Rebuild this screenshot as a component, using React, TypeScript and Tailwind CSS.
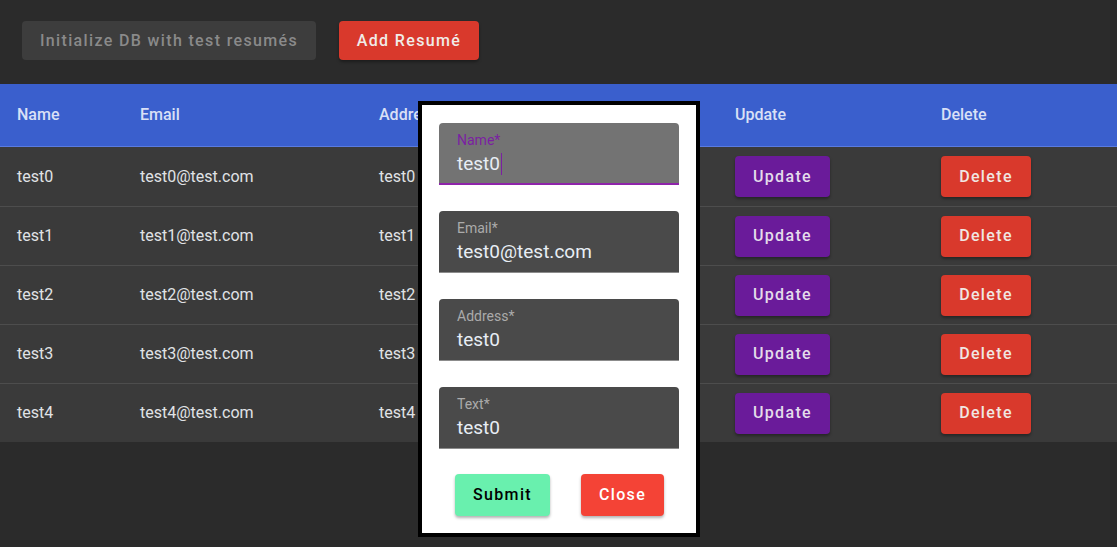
import React from "react";

type Resume = { name: string; email: string; address: string; text: string };

const RESUMES: Resume[] = [0, 1, 2, 3, 4].map(i => ({
  name: `test${i}`,
  email: `test${i}@test.com`,
  address: `test${i}`,
  text: `test${i}`,
}));

const COLS = "grid grid-cols-[140px_239px_178px_178px_206px_1fr] items-center";

function Field({ label, value, focused }: { label: string; value: string; focused?: boolean }) {
  return (
    <div
      className={`h-[62px] w-[240px] rounded-t-[4px] px-[18px] pt-[7px] ${
        focused ? "bg-[#737373] border-b-2 border-[#8e24aa]" : "bg-[#4a4a4a] border-b border-[#8c8c8c]"
      }`}
    >
      <div className={`text-[14px] leading-[20px] ${focused ? "text-[#7b1fa2]" : "text-[#ababab]"}`}>{label}</div>
      <div className="mt-px flex items-center text-[19px] leading-[26px] text-[#e8eef5]">
        {value}
        {focused && <span className="ml-px inline-block h-[22px] w-px bg-[#7b1fa2]" />}
      </div>
    </div>
  );
}

export default function App() {
  return (
    <div className="relative min-h-[547px] bg-[#2b2b2b] font-['Roboto',sans-serif]">
      {/* Toolbar */}
      <div className="flex h-[84px] items-start gap-[23px] pl-[22px] pt-[21px]">
        <button className="h-[39px] w-[294px] rounded-[4px] bg-[#3d3d3d] text-[16px] font-medium tracking-[1.35px] text-[#8a8a8a]">
          Initialize DB with test resumés
        </button>
        <button className="h-[39px] w-[140px] rounded-[4px] bg-[#d9392c] text-[16px] font-medium tracking-[1.35px] text-[#f0ece8] shadow-[0_2px_3px_rgba(0,0,0,0.35)]">
          Add Resumé
        </button>
      </div>

      {/* Table */}
      <div>
        <div className={`${COLS} h-[63px] border-b border-[#5a7be0] bg-[#3a5fcd] text-[16px] font-medium text-[#d9e0f6]`}>
          <div className="pl-[17px]">Name</div>
          <div>Email</div>
          <div>Address</div>
          <div>Text</div>
          <div>Update</div>
          <div>Delete</div>
        </div>
        {RESUMES.map((r, i) => (
          <div
            key={r.name}
            className={`${COLS} h-[59px] bg-[#3a3a3a] text-[16px] text-[#e0e3e6] ${i > 0 ? "border-t border-[#4d4d4d]" : ""}`}
          >
            <div className="pl-[17px]">{r.name}</div>
            <div>{r.email}</div>
            <div>{r.address}</div>
            <div>{r.text}</div>
            <div>
              <button className="h-[41px] w-[95px] rounded-[4px] bg-[#6a1b9a] text-[16px] font-medium tracking-[1.35px] text-[#e4dcea] shadow-[0_2px_3px_rgba(0,0,0,0.35)]">
                Update
              </button>
            </div>
            <div>
              <button className="h-[41px] w-[90px] rounded-[4px] bg-[#d9392c] text-[16px] font-medium tracking-[1.35px] text-[#f0e6e2] shadow-[0_2px_3px_rgba(0,0,0,0.35)]">
                Delete
              </button>
            </div>
          </div>
        ))}
      </div>

      {/* Update modal */}
      <div className="absolute left-[418px] top-[101px] w-[282px] border-4 border-black bg-white px-[17px] pb-[17px] pt-[18px]">
        <div className="flex flex-col gap-[26px]">
          <Field label="Name*" value="test0" focused />
          <Field label="Email*" value="test0@test.com" />
          <Field label="Address*" value="test0" />
          <Field label="Text*" value="test0" />
        </div>
        <div className="mt-[25px] flex gap-[31px] pl-[16px]">
          <button className="h-[42px] w-[95px] rounded-[4px] bg-[#69f0ae] text-[16px] font-medium tracking-[1.35px] text-black shadow-[0_2px_3px_rgba(0,0,0,0.3)]">
            Submit
          </button>
          <button className="h-[42px] w-[83px] rounded-[4px] bg-[#f44336] text-[16px] font-medium tracking-[1.35px] text-white shadow-[0_2px_3px_rgba(0,0,0,0.3)]">
            Close
          </button>
        </div>
      </div>
    </div>
  );
}
